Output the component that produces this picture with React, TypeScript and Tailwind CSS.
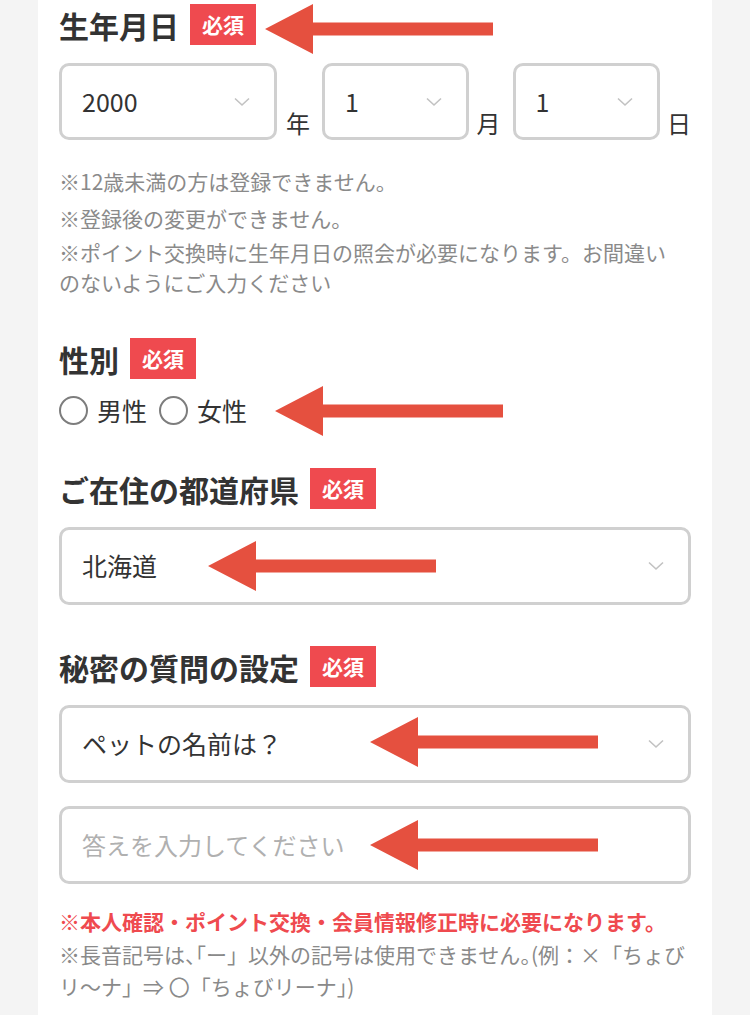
import React from 'react';

// ----------------------------------------------------------------
// Small parts
// ----------------------------------------------------------------
function Badge() {
  return (
    <span className="inline-flex h-[41px] w-[66px] items-center justify-center bg-[#ef4a4f] text-[21px] font-bold text-white">
      必須
    </span>
  );
}

function Title({ children }: { children: React.ReactNode }) {
  return (
    <div className="flex h-[41px] items-center gap-[11px]">
      <h2 className="text-[30px] font-bold leading-none text-[#333]">{children}</h2>
      <Badge />
    </div>
  );
}

// half-width punctuation
function H({ children }: { children: React.ReactNode }) {
  return <span className="[font-feature-settings:'halt']">{children}</span>;
}

function Chevron() {
  return (
    <svg width="16" height="10" viewBox="0 0 16 10" className="shrink-0">
      <polyline points="1,1.5 8,8 15,1.5" fill="none" stroke="#c2c2c2" strokeWidth="1.6" />
    </svg>
  );
}

function SelectBox({ value, className }: { value: string; className?: string }) {
  return (
    <div
      className={`flex items-center justify-between rounded-[10px] border-[3px] border-[#d0d0d0] bg-white pl-[20px] pr-[24px] ${className ?? ''}`}
    >
      <span className="text-[25px] text-[#333]">{value}</span>
      <Chevron />
    </div>
  );
}

function Radio({ label }: { label: string }) {
  return (
    <label className="flex items-center gap-[9px]">
      <span className="h-[29px] w-[29px] rounded-full border-2 border-[#7d7d7d]" />
      <span className="text-[25px] leading-[30px] text-[#333]">{label}</span>
    </label>
  );
}

// Red annotation arrow (lies over the form)
function Arrow({ left, top }: { left: number; top: number }) {
  return (
    <svg
      width="228"
      height="50"
      viewBox="0 0 228 50"
      className="pointer-events-none absolute"
      style={{ left, top }}
    >
      <polygon points="0,25 48,0 48,18.5 228,18.5 228,31.5 48,31.5 48,50" fill="#e5503f" />
    </svg>
  );
}

// ----------------------------------------------------------------
// Page
// ----------------------------------------------------------------
export default function App() {
  return (
    <div className="min-h-[1015px] bg-[#f4f4f4] font-['Noto_Sans_CJK_JP',sans-serif]">
      <div className="relative mx-[38px] min-h-[1015px] bg-white px-[21px] pt-[4px] pb-10">
        {/* 生年月日 */}
        <Title>生年月日</Title>
        <div className="mt-[18px] flex items-end">
          <SelectBox value="2000" className="h-[77px] w-[219px]" />
          <span className="ml-[9px] pb-[2px] text-[24px] leading-[30px] text-[#333]">年</span>
          <SelectBox value="1" className="ml-[12px] h-[77px] w-[147px]" />
          <span className="ml-[8px] pb-[2px] text-[24px] leading-[30px] text-[#333]">月</span>
          <SelectBox value="1" className="ml-[12px] h-[77px] w-[148px]" />
          <span className="ml-[7px] pb-[2px] text-[24px] leading-[30px] text-[#333]">日</span>
        </div>
        <div className="mt-[26px] text-[21px] leading-[30px] text-[#8a8a8a]">
          <p>※12歳未満の方は登録できません。</p>
          <p className="mt-[7px]">※登録後の変更ができません。</p>
          <p className="mt-[4px] max-w-[620px]">
            ※ポイント交換時に生年月日の照会が必要になります。お間違いのないようにご入力ください
          </p>
        </div>

        {/* 性別 */}
        <div className="mt-[41px]">
          <Title>性別</Title>
        </div>
        <div className="mt-[16px] flex items-center gap-[12px]">
          <Radio label="男性" />
          <Radio label="女性" />
        </div>

        {/* ご在住の都道府県 */}
        <div className="mt-[43px]">
          <Title>ご在住の都道府県</Title>
        </div>
        <SelectBox value="北海道" className="mt-[18px] h-[78px] w-full" />

        {/* 秘密の質問の設定 */}
        <div className="mt-[41px]">
          <Title>秘密の質問の設定</Title>
        </div>
        <SelectBox value="ペットの名前は？" className="mt-[18px] h-[78px] w-full" />
        <div className="mt-[23px] flex h-[78px] items-center rounded-[10px] border-[3px] border-[#d0d0d0] pl-[20px]">
          <span className="text-[24px] text-[#b0b0b0]">答えを入力してください</span>
        </div>
        <p className="mt-[22px] text-[21px] font-bold leading-[30px] text-[#ef4a4f]">
          ※本人確認・ポイント交換・会員情報修正時に必要になります。
        </p>
        <p className="mt-[2px] text-[21px] leading-[32px] text-[#8a8a8a]">
          ※長音記号は<H>、「</H>ー」以外の記号は使用できません<H>。</H>(例：×「ちょびリ～ナ」⇒ 〇「ちょびリーナ」)
        </p>

        {/* annotation arrows */}
        <Arrow left={227} top={4} />
        <Arrow left={237} top={386} />
        <Arrow left={170} top={541} />
        <Arrow left={332} top={717} />
        <Arrow left={332} top={820} />
      </div>
    </div>
  );
}
